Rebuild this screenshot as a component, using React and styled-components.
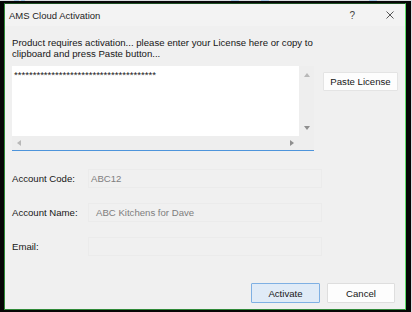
import React from 'react';
import styled, { createGlobalStyle } from 'styled-components';

const GlobalStyle = createGlobalStyle`
  html, body {
    margin: 0;
    padding: 0;
    background: #dadde1;
  }
  body {
    font-family: "Liberation Sans", Arial, sans-serif;
  }
`;

const Screen = styled.div`
  width: 412px;
  height: 312px;
  display: flex;
  flex-direction: column;
  background: #dadde1;
  overflow: hidden;
`;

const Strip = styled.div`
  height: 1px;
  flex-shrink: 0;
  display: flex;
`;

const Blip = styled.span`
  width: ${(p) => p.$w}px;
  margin-left: ${(p) => p.$gap}px;
  background: #a9c9e6;
`;

const Frame = styled.div`
  flex: 1;
  display: flex;
  margin-right: 1px;
  border-style: solid;
  border-color: #060606;
  border-width: 2px 5px 2px 4px;
`;

const Dialog = styled.div`
  flex: 1;
  display: flex;
  flex-direction: column;
  background: #f0f0f0;
  border: 1px solid #2f8a38;
  border-top-color: #1e4f24;
  border-right-color: #5ee069;
  color: #161616;
  font-size: 9.6px;
`;

const TitleBar = styled.div`
  height: 22px;
  display: flex;
  align-items: center;
  padding: 0 11px 0 4px;
  background: #f3f3f3;
`;

const Title = styled.span`
  flex: 1;
  font-size: 9.5px;
  color: #1c1c1c;
`;

const Controls = styled.div`
  display: flex;
  align-items: center;
  gap: 31px;
  color: #444;
`;

const Help = styled.span`
  font-size: 10px;
`;

const Message = styled.p`
  margin: 11px 7px 0;
  line-height: 11px;
`;

const EditorRow = styled.div`
  display: flex;
  align-items: flex-start;
  gap: 9px;
  margin-top: 7px;
  padding-left: 7px;
`;

const Editor = styled.div`
  width: 302px;
  height: 85px;
  box-sizing: border-box;
  display: grid;
  grid-template-columns: 287px 15px;
  grid-template-rows: 70px 14px;
  border-bottom: 1px solid #4d94db;
`;

const TextPane = styled.div`
  background: #ffffff;
  padding: 3px 2px 0;
  line-height: 11px;
  overflow: hidden;
  white-space: nowrap;
`;

const Track = styled.div`
  display: flex;
  flex-direction: ${(p) => (p.$vertical ? 'column' : 'row')};
  justify-content: space-between;
  align-items: center;
  padding: ${(p) => (p.$vertical ? '7px 0 6px' : '0 5px')};
  background: #eeeeee;
`;

const Corner = styled.div`
  background: #eeeeee;
`;

const Arrow = styled.svg`
  display: block;
  fill: ${(p) => (p.$dim ? '#b8b8b8' : '#8f8f8f')};
`;

const PasteButton = styled.button`
  margin-top: 6px;
  width: 75px;
  height: 19px;
  padding: 0;
  background: #fdfdfd;
  border: 1px solid #e4e4e4;
  border-radius: 1px;
  font-family: inherit;
  font-size: 9.6px;
  color: #161616;
`;

const Fields = styled.div`
  display: flex;
  flex-direction: column;
  gap: 15px;
  margin-top: 18px;
  padding: 0 7px;
`;

const Row = styled.div`
  display: flex;
  align-items: center;
  height: 19px;
`;

const Label = styled.span`
  width: 76px;
  flex-shrink: 0;
`;

const Field = styled.div`
  width: 234px;
  height: 19px;
  box-sizing: border-box;
  display: flex;
  align-items: center;
  padding-left: ${(p) => p.$indent}px;
  border: 1px solid #ebebeb;
  color: #7e7e7e;
`;

const Footer = styled.div`
  margin-top: auto;
  display: flex;
  justify-content: flex-end;
  gap: 7px;
  padding: 0 10px 6px 0;
`;

const DialogButton = styled.button`
  width: ${(p) => p.$w}px;
  height: 20px;
  padding: 0;
  font-family: inherit;
  font-size: 9.6px;
  color: #161616;
  border-radius: 1px;
  background: ${(p) => (p.$primary ? '#e0ebf7' : '#fdfdfd')};
  border: 1px solid ${(p) => (p.$primary ? '#7fb0e3' : '#dedede')};
`;

const blips = [
  [14, 5],
  [2, 4],
  [206, 8],
  [22, 8],
  [100, 8],
];

const CloseIcon = () => (
  <svg width="8" height="8" viewBox="0 0 8 8">
    <path d="M0.5 0.5 L7.5 7.5 M7.5 0.5 L0.5 7.5" stroke="#444" strokeWidth="0.9" fill="none" />
  </svg>
);

const Up = ({ dim }) => (
  <Arrow $dim={dim} width="6" height="4" viewBox="0 0 6 4">
    <polygon points="3,0 6,4 0,4" />
  </Arrow>
);

const Down = ({ dim }) => (
  <Arrow $dim={dim} width="6" height="4" viewBox="0 0 6 4">
    <polygon points="0,0 6,0 3,4" />
  </Arrow>
);

const Left = ({ dim }) => (
  <Arrow $dim={dim} width="4" height="6" viewBox="0 0 4 6">
    <polygon points="4,0 4,6 0,3" />
  </Arrow>
);

const Right = ({ dim }) => (
  <Arrow $dim={dim} width="4" height="6" viewBox="0 0 4 6">
    <polygon points="0,0 4,3 0,6" />
  </Arrow>
);

const App = () => {
  return (
    <Screen>
      <GlobalStyle />
      <Strip>
        {blips.map(([gap, w], i) => (
          <Blip key={i} $gap={gap} $w={w} />
        ))}
      </Strip>
      <Frame>
        <Dialog>
          <TitleBar>
            <Title>AMS Cloud Activation</Title>
            <Controls>
              <Help>?</Help>
              <CloseIcon />
            </Controls>
          </TitleBar>

          <Message>
            Product requires activation... please enter your License here or copy to
            <br />
            clipboard and press Paste button...
          </Message>

          <EditorRow>
            <Editor>
              <TextPane>{'*'.repeat(38)}</TextPane>
              <Track $vertical>
                <Up dim />
                <Down />
              </Track>
              <Track>
                <Left dim />
                <Right />
              </Track>
              <Corner />
            </Editor>
            <PasteButton>Paste License</PasteButton>
          </EditorRow>

          <Fields>
            <Row>
              <Label>Account Code:</Label>
              <Field $indent={2}>ABC12</Field>
            </Row>
            <Row>
              <Label>Account Name:</Label>
              <Field $indent={7}>ABC Kitchens for Dave</Field>
            </Row>
            <Row>
              <Label>Email:</Label>
              <Field $indent={7} />
            </Row>
          </Fields>

          <Footer>
            <DialogButton $primary $w={69}>Activate</DialogButton>
            <DialogButton $w={68}>Cancel</DialogButton>
          </Footer>
        </Dialog>
      </Frame>
    </Screen>
  );
};

export default App;
